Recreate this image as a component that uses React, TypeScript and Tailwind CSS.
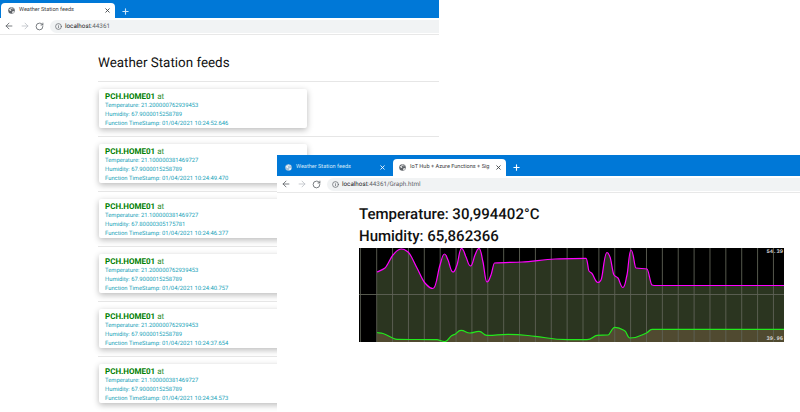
import { ArrowLeft, ArrowRight, Info, Plus, RotateCw, X } from "lucide-react";

const feeds = [
  { temp: "21.200000762939453", hum: "67.9000015258789", time: "01/04/2021 10:24:52.646" },
  { temp: "21.100000381469727", hum: "67.9000015258789", time: "01/04/2021 10:24:49.470" },
  { temp: "21.100000381469727", hum: "67.80000305175781", time: "01/04/2021 10:24:46.377" },
  { temp: "21.200000762939453", hum: "67.9000015258789", time: "01/04/2021 10:24:40.757" },
  { temp: "21.200000762939453", hum: "67.9000015258789", time: "01/04/2021 10:24:37.654" },
  { temp: "21.100000381469727", hum: "67.9000015258789", time: "01/04/2021 10:24:34.573" },
];

// points read off the chart, in page coordinates minus chart origin (359,248)
const magenta = [
  [377, 272], [385, 268], [393, 255], [401.5, 249], [408, 252], [417, 268], [425, 283], [433, 288.5],
  [440, 265], [444.5, 254], [448, 260], [453, 272], [457, 265], [461.5, 248.5], [466, 257], [470.5, 266], [475, 255],
  [479, 248.5], [483, 262], [487, 282], [491, 275], [494.5, 263], [522, 262], [555, 259], [586, 258.3], [589, 271],
  [592, 273.5], [598, 282.5], [601, 280], [607, 252.5], [610, 257], [614, 275], [618, 278], [623, 287.5], [627, 275],
  [631, 250], [636, 268], [647, 269], [652, 285], [654, 285.5], [784, 285.5],
].map(([x, y]) => [x - 359, y - 248]);

const green = [
  [377, 332.5], [383, 333.5], [397, 339.3], [437, 339.7], [445, 341.5], [451.5, 335.7], [455, 334.3], [461, 330.3],
  [470, 333], [479, 331.3], [487, 335.3], [508, 334.3], [535, 336.3], [568, 339.7], [587, 339.7], [597, 335.3],
  [608, 335], [615, 327.3], [625, 331], [630, 338], [647, 332.7], [652, 329.3], [784, 329.3],
].map(([x, y]) => [x - 359, y - 248]);

// monotone cubic through the points: flat at peaks, no overshoot on the plateaus
function smooth(points: number[][]) {
  const n = points.length;
  const slopes: number[] = [];
  for (let i = 0; i < n - 1; i++) {
    slopes.push((points[i + 1][1] - points[i][1]) / (points[i + 1][0] - points[i][0]));
  }
  const tangents = points.map((_, i) => {
    if (i === 0) return slopes[0];
    if (i === n - 1) return slopes[n - 2];
    const a = slopes[i - 1];
    const b = slopes[i];
    if (a * b <= 0) return 0;
    return (2 * a * b) / (a + b);
  });
  let d = `M${points[0][0]} ${points[0][1]}`;
  for (let i = 0; i < n - 1; i++) {
    const [x0, y0] = points[i];
    const [x1, y1] = points[i + 1];
    const dx = x1 - x0;
    // wider handles at the peaks so they come out round
    const h0 = tangents[i] === 0 ? dx * 0.5 : dx / 3;
    const h1 = tangents[i + 1] === 0 ? dx * 0.5 : dx / 3;
    d += ` C${x0 + h0} ${y0 + tangents[i] * h0} ${x1 - h1} ${y1 - tangents[i + 1] * h1} ${x1} ${y1}`;
  }
  return d;
}

const gridLines = Array.from({ length: 26 }, (_, i) => 17.7 + i * 15.87);

function Chart() {
  const top = smooth(magenta);
  const bottom = smooth(green);
  return (
    <div className="relative h-[94px] w-[425px] bg-black">
      <svg width="425" height="94" viewBox="0 0 425 94" className="block">
        <path d={`${top} L425 94 L18 94 Z`} fill="#2b3520" />
        <path d={`${bottom} L425 94 L18 94 Z`} fill="#504a30" />
        <line x1="1.5" y1="0" x2="1.5" y2="94" stroke="#4a4d44" strokeWidth="1" />
        {gridLines.map((x) => (
          <line key={x} x1={x} y1="0" x2={x} y2="94" stroke="#5f6256" strokeWidth="0.9" />
        ))}
        <line x1="0" y1="46.5" x2="425" y2="46.5" stroke="#5f6256" strokeWidth="0.9" />
        <path d={top} fill="none" stroke="#ff00ff" strokeWidth="1.2" />
        <path d={bottom} fill="none" stroke="#22e81c" strokeWidth="1.2" />
      </svg>
      <span className="absolute right-[1px] top-[0px] font-['Liberation_Mono',monospace] text-[5.5px] font-bold leading-[7px] text-[#d8d8d8]">
        54.39
      </span>
      <span className="absolute bottom-[0px] right-[1px] font-['Liberation_Mono',monospace] text-[5.5px] font-bold leading-[7px] text-[#d8d8d8]">
        39.96
      </span>
    </div>
  );
}

function Favicon({ className }: { className: string }) {
  return (
    <svg viewBox="0 0 16 16" className={className}>
      <circle cx="8" cy="8" r="7.5" fill="currentColor" />
      <path d="M2 5 C4 6 5 5 6 3 C7 2 8 1 9 1 L9 3 C8 5 6 5 6 7 L8 9 L5 9 L2 6 Z" fill="#fff" opacity="0.85" />
      <path d="M10 14 L9 11 L12 9 L14.5 10 C14 12 12 14 10 14 Z" fill="#fff" opacity="0.85" />
      <path d="M11 2.5 L13 4 L11 6 L10 4 Z" fill="#fff" opacity="0.85" />
    </svg>
  );
}

function Toolbar({ url, path }: { url: string; path?: string }) {
  return (
    <div className="flex h-[17px] shrink-0 items-center border-b border-[#e8e8e8] bg-white pl-[4px]">
      <ArrowLeft className="h-[10px] w-[10px] text-[#5f6368]" strokeWidth={2} />
      <ArrowRight className="ml-[6px] h-[10px] w-[10px] text-[#bdc1c6]" strokeWidth={2} />
      <RotateCw className="ml-[5px] h-[9px] w-[9px] text-[#5f6368]" strokeWidth={2.2} />
      <div className="ml-[6px] flex h-[13px] flex-1 items-center rounded-l-full bg-[#f1f3f4] pl-[5px]">
        <Info className="h-[7px] w-[7px] text-[#5f6368]" strokeWidth={2.4} />
        <span className="ml-[3px] text-[6.3px] leading-none text-[#202124]">
          {url}
          <span className="text-[#5f6368]">{path}</span>
        </span>
      </div>
    </div>
  );
}

function FeedCard({ temp, hum, time }: { temp: string; hum: string; time: string }) {
  return (
    <div className="h-[39px] w-[208px] rounded-[2px] bg-white px-[6px] pt-[2px] shadow-[0_2px_6px_rgba(0,0,0,0.28)]">
      <div className="text-[8px] leading-[11px] text-[#008000]">
        <b className="font-bold">PCH.HOME01</b> <span className="text-[#2f8f2f]">at</span>
      </div>
      <div className="text-[5.85px] leading-[9px] text-[#17a2b8]">Temperature: {temp}</div>
      <div className="text-[5.85px] leading-[9px] text-[#17a2b8]">Humidity: {hum}</div>
      <div className="text-[5.85px] leading-[9px] text-[#17a2b8]">Function TimeStamp: {time}</div>
    </div>
  );
}

export default function App() {
  return (
    <div className="relative h-[412px] w-[800px] overflow-hidden bg-white font-['Roboto',sans-serif] [text-rendering:geometricPrecision]">
      {/* first browser window */}
      <div className="absolute left-0 top-0 flex h-[412px] w-[439px] flex-col overflow-hidden bg-white">
        <div className="flex h-[18px] shrink-0 items-end bg-[#0078d7] pl-[1px]">
          <div className="flex h-[15px] w-[114px] items-center rounded-t-[4px] bg-white pl-[7px] pr-[4px]">
            <Favicon className="h-[7px] w-[7px] text-[#5f6368]" />
            <span className="ml-[4px] flex-1 text-[5.6px] leading-none text-[#3c4043]">Weather Station feeds</span>
            <X className="h-[7px] w-[7px] text-[#3c4043]" strokeWidth={3} />
          </div>
          <Plus className="mb-[2px] ml-[6px] h-[9px] w-[9px] text-[#cfe6f8]" strokeWidth={3} />
        </div>
        <Toolbar url="localhost" path=":44361" />
        <div className="pl-[98px] pt-[19px]">
          <h1 className="text-[13.4px] font-normal leading-[20px] text-[#111]">Weather Station feeds</h1>
          <div className="mt-[7px] flex flex-col">
            {feeds.map((f) => (
              <div key={f.time} className="border-t border-[#e6e6e6] pb-[8px] pl-[1px] pt-[7px]">
                <FeedCard temp={f.temp} hum={f.hum} time={f.time} />
              </div>
            ))}
          </div>
        </div>
      </div>

      {/* second browser window, on top of the first */}
      <div className="absolute left-[277px] top-[155px] flex h-[257px] w-[523px] flex-col overflow-hidden bg-white">
        <div className="flex h-[21px] shrink-0 items-end bg-[#0078d7] pl-[1px]">
          <div className="mb-[1px] flex h-[15px] w-[115px] items-center pl-[7px] pr-[7px]">
            <Favicon className="h-[7px] w-[7px] text-[#a9c3da]" />
            <span className="ml-[4px] flex-1 text-[5.6px] leading-none text-[#d5e8f7]">Weather Station feeds</span>
            <X className="h-[7px] w-[7px] text-white" strokeWidth={3} />
          </div>
          <div className="flex h-[17px] w-[113px] items-center rounded-t-[4px] bg-white pl-[6px] pr-[4px]">
            <Favicon className="h-[7px] w-[7px] shrink-0 text-[#5f6368]" />
            <span className="ml-[4px] flex-1 whitespace-nowrap text-[5.6px] leading-none text-[#3c4043]">
              IoT Hub + Azure Functions + Sig
            </span>
            <X className="ml-[2px] h-[7px] w-[7px] shrink-0 text-[#3c4043]" strokeWidth={3} />
          </div>
          <Plus className="mb-[4px] ml-[6px] h-[9px] w-[9px] text-white" strokeWidth={3} />
        </div>
        <Toolbar url="localhost" path=":44361/Graph.html" />
        <div className="pl-[82px] pt-[10px]">
          <div className="text-[15px] font-medium leading-[22px] text-[#111]">Temperature: 30,994402°C</div>
          <div className="text-[15px] font-medium leading-[22px] text-[#111]">Humidity: 65,862366</div>
          <div className="mt-[1px]">
            <Chart />
          </div>
        </div>
      </div>
    </div>
  );
}
